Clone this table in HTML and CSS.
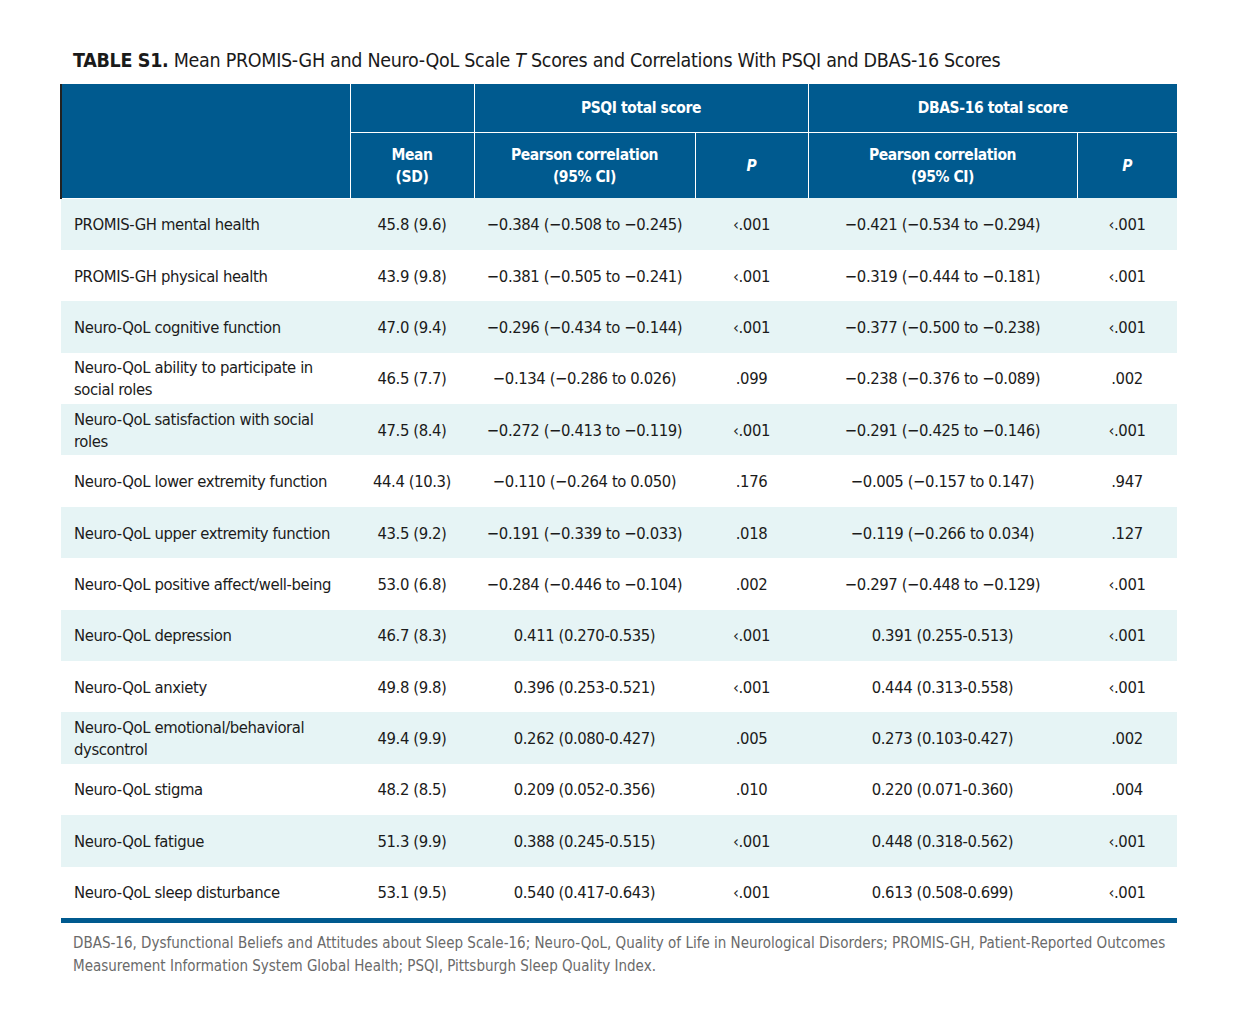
FILE: index.html
```html
<!DOCTYPE html>
<html lang="en">
<head>
<meta charset="utf-8">
<title>Table S1</title>
<link rel="stylesheet" href="styles.css">
</head>
<body>
<div class="page">
  <h1 class="title"><b>TABLE S1.</b> Mean PROMIS-GH and Neuro-QoL Scale <i>T</i> Scores and Correlations With PSQI and DBAS-16 Scores</h1>
  <table class="data">
    <colgroup>
      <col class="c-label"><col class="c-mean"><col class="c-corr1"><col class="c-p1"><col class="c-corr2"><col class="c-p2">
    </colgroup>
    <thead>
      <tr class="h1">
        <th rowspan="2" class="first"></th>
        <th></th>
        <th colspan="2">PSQI total score</th>
        <th colspan="2">DBAS-16 total score</th>
      </tr>
      <tr class="h2">
        <th>Mean<br>(SD)</th>
        <th>Pearson correlation<br>(95% CI)</th>
        <th><i>P</i></th>
        <th>Pearson correlation<br>(95% CI)</th>
        <th><i>P</i></th>
      </tr>
    </thead>
    <tbody>
      <tr><td>PROMIS-GH mental health</td><td>45.8 (9.6)</td><td>−0.384 (−0.508 to −0.245)</td><td>‹.001</td><td>−0.421 (−0.534 to −0.294)</td><td>‹.001</td></tr>
      <tr><td>PROMIS-GH physical health</td><td>43.9 (9.8)</td><td>−0.381 (−0.505 to −0.241)</td><td>‹.001</td><td>−0.319 (−0.444 to −0.181)</td><td>‹.001</td></tr>
      <tr><td>Neuro-QoL cognitive function</td><td>47.0 (9.4)</td><td>−0.296 (−0.434 to −0.144)</td><td>‹.001</td><td>−0.377 (−0.500 to −0.238)</td><td>‹.001</td></tr>
      <tr><td>Neuro-QoL ability to participate in<br>social roles</td><td>46.5 (7.7)</td><td>−0.134 (−0.286 to 0.026)</td><td>.099</td><td>−0.238 (−0.376 to −0.089)</td><td>.002</td></tr>
      <tr><td>Neuro-QoL satisfaction with social<br>roles</td><td>47.5 (8.4)</td><td>−0.272 (−0.413 to −0.119)</td><td>‹.001</td><td>−0.291 (−0.425 to −0.146)</td><td>‹.001</td></tr>
      <tr><td>Neuro-QoL lower extremity function</td><td>44.4 (10.3)</td><td>−0.110 (−0.264 to 0.050)</td><td>.176</td><td>−0.005 (−0.157 to 0.147)</td><td>.947</td></tr>
      <tr><td>Neuro-QoL upper extremity function</td><td>43.5 (9.2)</td><td>−0.191 (−0.339 to −0.033)</td><td>.018</td><td>−0.119 (−0.266 to 0.034)</td><td>.127</td></tr>
      <tr><td>Neuro-QoL positive affect/well-being</td><td>53.0 (6.8)</td><td>−0.284 (−0.446 to −0.104)</td><td>.002</td><td>−0.297 (−0.448 to −0.129)</td><td>‹.001</td></tr>
      <tr><td>Neuro-QoL depression</td><td>46.7 (8.3)</td><td>0.411 (0.270-0.535)</td><td>‹.001</td><td>0.391 (0.255-0.513)</td><td>‹.001</td></tr>
      <tr><td>Neuro-QoL anxiety</td><td>49.8 (9.8)</td><td>0.396 (0.253-0.521)</td><td>‹.001</td><td>0.444 (0.313-0.558)</td><td>‹.001</td></tr>
      <tr><td>Neuro-QoL emotional/behavioral<br>dyscontrol</td><td>49.4 (9.9)</td><td>0.262 (0.080-0.427)</td><td>.005</td><td>0.273 (0.103-0.427)</td><td>.002</td></tr>
      <tr><td>Neuro-QoL stigma</td><td>48.2 (8.5)</td><td>0.209 (0.052-0.356)</td><td>.010</td><td>0.220 (0.071-0.360)</td><td>.004</td></tr>
      <tr><td>Neuro-QoL fatigue</td><td>51.3 (9.9)</td><td>0.388 (0.245-0.515)</td><td>‹.001</td><td>0.448 (0.318-0.562)</td><td>‹.001</td></tr>
      <tr><td>Neuro-QoL sleep disturbance</td><td>53.1 (9.5)</td><td>0.540 (0.417-0.643)</td><td>‹.001</td><td>0.613 (0.508-0.699)</td><td>‹.001</td></tr>
    </tbody>
  </table>
  <p class="note">DBAS-16, Dysfunctional Beliefs and Attitudes about Sleep Scale-16; Neuro-QoL, Quality of Life in Neurological Disorders; PROMIS-GH, Patient-Reported Outcomes<br>Measurement Information System Global Health; PSQI, Pittsburgh Sleep Quality Index.</p>
</div>
</body>
</html>
```

FILE: styles.css
```css
html, body {
  margin: 0;
  padding: 0;
  background: #ffffff;
}

.page {
  padding: 47px 0 0 60px;
  width: 1116px;
  font-family: "DejaVu Sans Condensed", "Liberation Sans", sans-serif;
  color: #1b1b1b;
}

.title {
  margin: 0 0 10px 13px;
  font-size: 19.5px;
  letter-spacing: -0.3px;
  line-height: 27px;
  font-weight: normal;
  color: #1a1a1a;
  white-space: nowrap;
}

.title b {
  font-weight: bold;
}

.data {
  width: 1116px;
  border-collapse: collapse;
  table-layout: fixed;
  font-size: 16.5px;
  letter-spacing: -0.4px;
}

.c-label { width: 289px; }
.c-mean { width: 124px; }
.c-corr1 { width: 221px; }
.c-p1 { width: 113px; }
.c-corr2 { width: 269px; }
.c-p2 { width: 100px; }

.data thead th {
  background: #005a8f;
  color: #ffffff;
  font-weight: bold;
  font-size: 15.5px;
  letter-spacing: -0.4px;
  line-height: 22px;
  text-align: center;
  padding: 0;
  border: 1px solid #ffffff;
  border-top: none;
}

.data thead th:last-child {
  border-right: none;
}

.data thead th.first {
  border-left: 2px solid #222222;
}

.data thead tr.h1 th {
  height: 48px;
}

.data thead tr.h2 th {
  height: 65px;
  border-bottom: none;
}

.data tbody td {
  height: 49.4px;
  padding: 2px 0 0 0;
  text-align: center;
  vertical-align: middle;
  line-height: 22px;
  white-space: nowrap;
}

.data tbody td:first-child {
  text-align: left;
  padding-left: 13px;
}

.data tbody tr:nth-child(odd) td {
  background: #e6f4f5;
}

.data tbody tr:last-child td {
  border-bottom: 5px solid #005a8f;
}

.note {
  margin: 9px 0 0 13px;
  font-size: 15px;
  line-height: 23px;
  color: #6a6a6a;
  white-space: nowrap;
}
```
